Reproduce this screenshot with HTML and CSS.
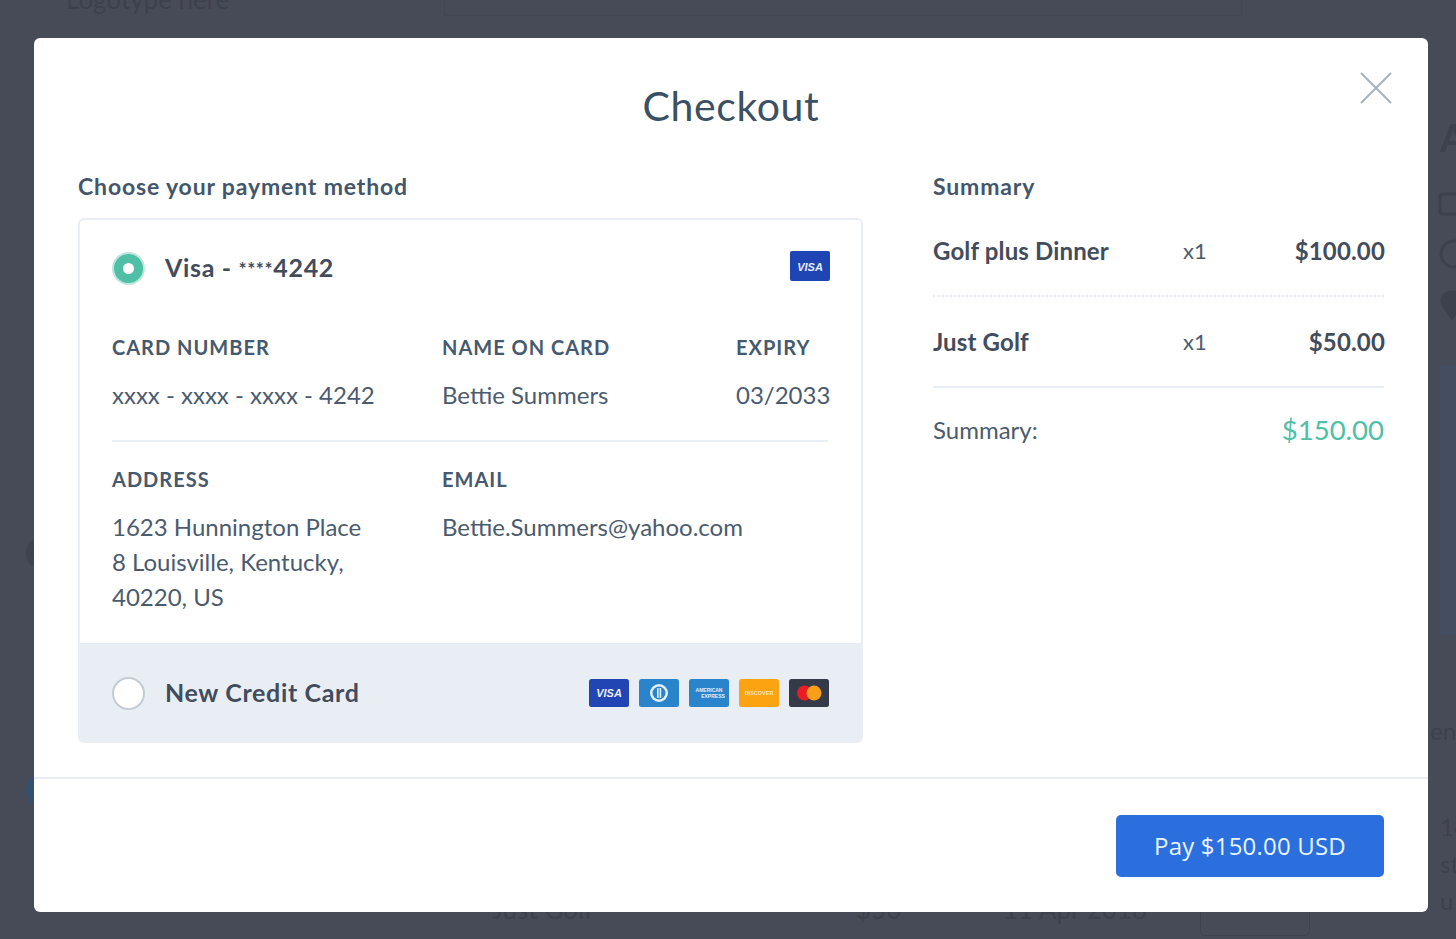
FILE: index.html
```html
<!DOCTYPE html>
<html lang="en">
<head>
  <meta charset="UTF-8" />
  <title>Checkout</title>
  <link rel="stylesheet" href="styles.css">
</head>
<body>
  <!-- page behind the overlay -->
  <div class="behind" aria-hidden="true">
    <span class="behind-logo">Logotype here</span>
    <span class="behind-field"></span>
    <span class="behind-letter">A</span>
    <svg class="behind-icons" width="20" height="130" viewBox="0 0 20 130" fill="none" stroke="#3d414d" stroke-width="3">
      <rect x="2" y="4" width="24" height="20" rx="2"/>
      <circle cx="16" cy="64" r="13"/>
      <path d="M14 102c6 0 10 4 10 9 0 5-6 12-10 17-4-5-10-12-10-17 0-5 4-9 10-9z" fill="#3d414d"/>
    </svg>
    <span class="behind-photo"></span>
    <span class="behind-en">en</span>
    <span class="behind-desc">14<br>st<br>u</span>
    <span class="behind-row behind-name">Just Golf</span>
    <span class="behind-row behind-price">$50</span>
    <span class="behind-row behind-date">11 Apr 2018</span>
    <span class="behind-select"></span>
    <span class="behind-dot behind-dot-grey"></span>
    <span class="behind-dot behind-dot-blue"></span>
  </div>

  <div class="modal">
    <button class="close" aria-label="Close">
      <svg width="32" height="32" viewBox="0 0 32 32"><path d="M1 1 31 31M31 1 1 31" fill="none" stroke="#a5b1be" stroke-width="2"/></svg>
    </button>
    <h1>Checkout</h1>

    <div class="columns">
      <div class="methods">
        <h2>Choose your payment method</h2>
        <div class="card-box">
          <div class="saved">
            <div class="method-row">
              <span class="radio radio-on"></span>
              <span class="method-name">Visa - <span class="stars">****</span>4242</span>
              <svg class="brand brand-one" width="40" height="30" viewBox="0 0 40 30"><rect width="40" height="30" rx="2" fill="#1f45b5"/><text x="20" y="19.5" class="brand-text" font-size="11">VISA</text></svg>
            </div>
            <div class="fields fields-top">
              <div>
                <div class="field-label">CARD NUMBER</div>
                <div class="field-value">xxxx - xxxx - xxxx - 4242</div>
              </div>
              <div>
                <div class="field-label">NAME ON CARD</div>
                <div class="field-value">Bettie Summers</div>
              </div>
              <div>
                <div class="field-label">EXPIRY</div>
                <div class="field-value">03/2033</div>
              </div>
            </div>
            <div class="fields fields-bottom">
              <div>
                <div class="field-label">ADDRESS</div>
                <div class="field-value">1623 Hunnington Place<br>8 Louisville, Kentucky,<br>40220, US</div>
              </div>
              <div>
                <div class="field-label">EMAIL</div>
                <div class="field-value">Bettie.Summers@yahoo.com</div>
              </div>
            </div>
          </div>
          <div class="method-row new-card">
            <span class="radio"></span>
            <span class="method-name">New Credit Card</span>
            <div class="brands">
              <svg class="brand" width="40" height="28" viewBox="0 0 40 28"><rect width="40" height="28" rx="2.5" fill="#2245b4"/><text x="20" y="18" class="brand-text" font-size="11">VISA</text></svg>
              <svg class="brand" width="40" height="28" viewBox="0 0 40 28"><rect width="40" height="28" rx="2.5" fill="#2a84cb"/><circle cx="20" cy="14" r="9" fill="#e4f0f9"/><circle cx="20" cy="14" r="6.5" fill="#2a84cb"/><rect x="18" y="9" width="1.6" height="10" fill="#e4f0f9"/><rect x="20.6" y="9" width="1.6" height="10" fill="#e4f0f9"/></svg>
              <svg class="brand" width="40" height="28" viewBox="0 0 40 28"><rect width="40" height="28" rx="2.5" fill="#2a84cb"/><text x="20" y="13" class="brand-text brand-plain" font-size="5">AMERICAN</text><text x="24" y="19" class="brand-text brand-plain" font-size="5">EXPRESS</text></svg>
              <svg class="brand" width="40" height="28" viewBox="0 0 40 28"><rect width="40" height="28" rx="2.5" fill="#fca311"/><text x="20" y="16" class="brand-text brand-plain brand-soft" font-size="5.5">DISCOVER</text></svg>
              <svg class="brand" width="40" height="28" viewBox="0 0 40 28"><rect width="40" height="28" rx="2.5" fill="#343a48"/><circle cx="15.5" cy="14" r="7.5" fill="#ec1c24"/><circle cx="25" cy="14" r="7.5" fill="#f79e1b"/></svg>
            </div>
          </div>
        </div>
      </div>

      <div class="summary">
        <h2>Summary</h2>
        <div class="line line-dotted">
          <span class="line-name">Golf plus Dinner</span>
          <span class="line-qty">x1</span>
          <span class="line-price">$100.00</span>
        </div>
        <div class="line line-solid">
          <span class="line-name">Just Golf</span>
          <span class="line-qty">x1</span>
          <span class="line-price">$50.00</span>
        </div>
        <div class="total">
          <span>Summary:</span>
          <span class="total-price">$150.00</span>
        </div>
      </div>
    </div>

    <div class="modal-footer">
      <button class="pay">Pay $150.00 USD</button>
    </div>
  </div>
</body>
</html>
```

FILE: styles.css
```css
html, body {
  height: 100%;
}
body {
  margin: 0;
  box-sizing: border-box;
  height: 939px;
  padding: 38px 28px 27px 34px;
  overflow: hidden;
  background: #474b57;
  font-family: "Lato", "Open Sans", sans-serif;
  color: #3c5064;
}

/* dimmed page under the modal */
.behind {
  position: absolute;
  top: 0;
  left: 0;
  width: 1456px;
  height: 939px;
  color: #3d414d;
  font-size: 20px;
}
.behind span,
.behind svg {
  position: absolute;
}
.behind-logo {
  left: 66px;
  top: -17px;
  font-size: 26px;
}
.behind-field {
  left: 444px;
  top: -30px;
  width: 796px;
  height: 44px;
  border: 1px solid #434753;
}
.behind-letter {
  left: 1440px;
  top: 114px;
  font-size: 38px;
  font-weight: 700;
}
.behind-icons {
  left: 1438px;
  top: 190px;
}
.behind-photo {
  left: 1440px;
  top: 365px;
  width: 30px;
  height: 270px;
  background: #454d60;
}
.behind-en {
  left: 1430px;
  top: 716px;
  font-size: 24px;
}
.behind-desc {
  left: 1440px;
  top: 808px;
  font-size: 24px;
  line-height: 37px;
}
.behind-row {
  top: 893px;
  font-size: 26px;
}
.behind-name {
  left: 492px;
}
.behind-price {
  left: 856px;
}
.behind-date {
  left: 1003px;
}
.behind-select {
  left: 1200px;
  top: 880px;
  width: 108px;
  height: 54px;
  border: 1px solid #3f434f;
  border-radius: 5px;
}
.behind-dot {
  left: 26px;
  width: 16px;
  height: 26px;
  border-radius: 50%;
}
.behind-dot-grey {
  top: 540px;
  background: #3f434f;
}
.behind-dot-blue {
  top: 777px;
  background: #34506f;
}

.modal {
  position: relative;
  display: flex;
  flex-direction: column;
  height: 100%;
  background: #fff;
  border-radius: 6px;
}
.close {
  position: absolute;
  top: 34px;
  right: 36px;
  padding: 0;
  border: none;
  background: none;
  line-height: 0;
  cursor: pointer;
}
h1 {
  margin: 43px 0 0;
  font-size: 41px;
  font-weight: 400;
  line-height: 50px;
  letter-spacing: 0.6px;
  text-align: center;
  color: #3c5064;
}
h2 {
  margin: 0;
  font-size: 23px;
  font-weight: 700;
  line-height: 28px;
  letter-spacing: 0.85px;
  color: #44566a;
}

.columns {
  display: flex;
  flex: 1;
  padding: 41px 44px 0;
}
.methods {
  width: 785px;
}
.card-box {
  margin-top: 18px;
  border: 2px solid #e9eef4;
  border-bottom: none;
  border-radius: 6px;
  overflow: hidden;
}
.saved {
  padding: 0 33px 0 32px;
  height: 423px;
}
.method-row {
  display: flex;
  align-items: center;
  height: 96px;
}
.method-name {
  margin-left: 20px;
  padding-bottom: 2px;
  font-size: 25px;
  font-weight: 700;
  letter-spacing: 0.65px;
  color: #434c5c;
}
.stars {
  font-size: 19px;
  vertical-align: 1px;
}
.radio {
  box-sizing: border-box;
  width: 33px;
  height: 33px;
  border: 2px solid #c3ccd6;
  border-radius: 50%;
  background: #fff;
}
.radio-on {
  width: 29px;
  height: 29px;
  margin: 0 2px;
  border: 9px solid #4fc0a6;
  box-shadow: 0 0 0 2px #bde6dc;
}
.brand-one {
  margin-left: auto;
  margin-right: -2px;
  transform: translateY(-2px);
}
.brand {
  display: block;
}
.brand-text {
  fill: #e8eefb;
  font-family: "Liberation Sans", sans-serif;
  font-weight: 700;
  font-style: italic;
  text-anchor: middle;
}
.brand-plain {
  font-style: normal;
}
.brand-soft {
  fill: #ffe3b0;
}

.fields {
  display: grid;
  grid-template-columns: 330px 294px 1fr;
}
.fields-top {
  height: 106px;
  padding-top: 18px;
  border-bottom: 2px solid #e9eef4;
}
.fields-bottom {
  padding-top: 24px;
}
.field-label {
  font-size: 20px;
  font-weight: 700;
  line-height: 26px;
  letter-spacing: 1px;
  color: #46596f;
}
.field-value {
  margin-top: 17px;
  font-size: 24px;
  line-height: 35px;
  color: #4b5b6f;
}

.new-card {
  height: 100px;
  padding: 0 32px;
  background: #e9eef4;
}
.brands {
  display: flex;
  gap: 10px;
  margin-left: auto;
}

.summary {
  width: 452px;
  margin-left: 70px;
}
.line {
  display: flex;
  align-items: center;
  height: 89px;
  font-size: 24px;
  font-weight: 700;
  letter-spacing: 0.15px;
  color: #434c5c;
}
.line-dotted {
  padding-top: 6px;
  border-bottom: 2px dotted #e4e9ef;
}
.line-solid {
  border-bottom: 2px solid #e9eef4;
}
.line-name {
  width: 250px;
}
.line-qty {
  font-size: 22px;
  font-weight: 400;
  color: #4b5b6f;
}
.line-price {
  margin-left: auto;
  margin-right: -1px;
  font-size: 24px;
}
.total {
  display: flex;
  justify-content: space-between;
  align-items: center;
  height: 83px;
  font-size: 24px;
  color: #4b5b6f;
}
.total-price {
  font-size: 27.5px;
  color: #4fbfa5;
}

.modal-footer {
  display: flex;
  justify-content: flex-end;
  align-items: center;
  height: 133px;
  padding-right: 44px;
  border-top: 2px solid #e9eef4;
}
.pay {
  width: 268px;
  height: 62px;
  border: none;
  border-radius: 5px;
  background: #2b6fdf;
  color: #e9f3ff;
  font-family: "Open Sans", sans-serif;
  font-size: 24px;
  font-weight: 500;
  letter-spacing: 0.2px;
  cursor: pointer;
}
```
